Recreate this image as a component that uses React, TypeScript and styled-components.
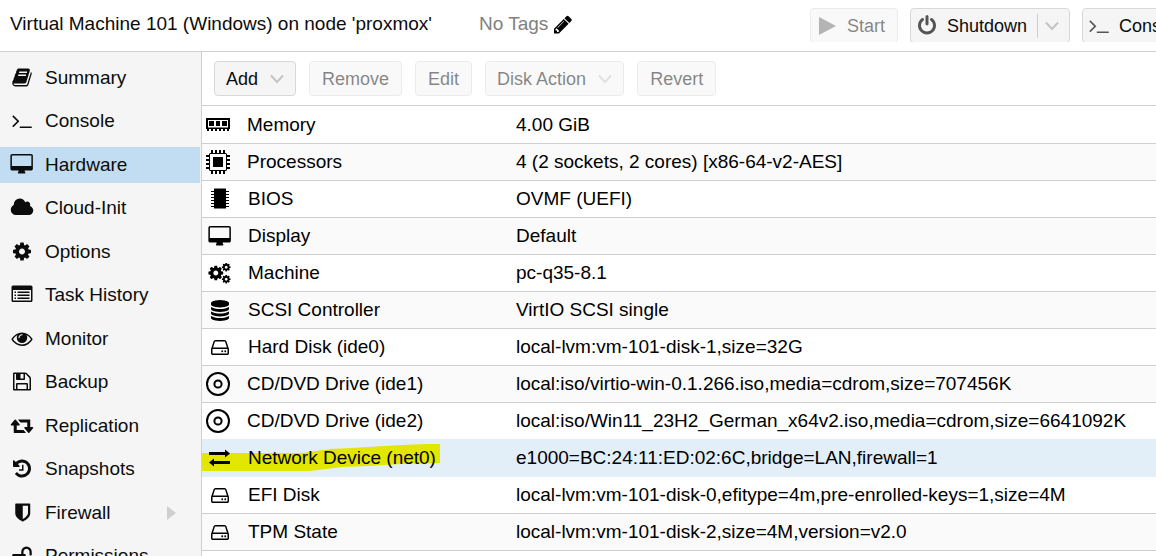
import React from "react";
import styled, { createGlobalStyle, css } from "styled-components";

const GlobalStyle = createGlobalStyle`
  * { box-sizing: border-box; }
  html, body, #root { height: 100%; }
  body {
    margin: 0;
    overflow: hidden;
    background: #fff;
    color: #0c0c0c;
    font-family: "Liberation Sans", Arial, Helvetica, sans-serif;
    font-size: 19px;
  }
`;

/* ---------- icons ---------- */

const COG =
  "M1152 896q0-106-75-181t-181-75-181 75-75 181 75 181 181 75 181-75 75-181zm512-109v222q0 12-8 23t-20 13l-185 28q-19 54-39 91 35 50 107 138 10 12 10 25t-9 23q-27 37-99 108t-94 71q-12 0-26-9l-138-108q-44 23-91 38-16 136-29 186-7 28-36 28h-222q-14 0-24.5-8.5t-11.5-21.5l-28-184q-49-16-90-37l-141 107q-10 9-25 9-14 0-25-11-126-114-165-168-7-10-7-23 0-12 8-23 15-21 51-66.5t54-70.5q-27-50-41-99l-183-27q-13-2-21-12.5t-8-23.5v-222q0-12 8-23t19-13l186-28q14-46 39-92-40-57-107-138-10-12-10-24 0-10 9-23 26-36 98.5-107.5t94.5-71.5q13 0 26 10l138 107q44-23 91-38 16-136 29-186 7-28 36-28h222q14 0 24.5 8.5t11.5 21.5l28 184q49 16 90 37l142-107q9-9 24-9 13 0 25 10 129 119 165 170 7 8 7 22 0 12-8 23-15 21-51 66.5t-54 70.5q26 50 41 98l183 28q13 2 21 12.5t8 23.5z";

const PATHS = {
  book: "M1703 478q40 57 18 129l-275 906q-19 64-76.5 107.5t-122.5 43.5h-923q-77 0-148.5-53.5t-99.5-131.5q-24-67-2-127 0-4 3-27t4-37q1-8-3-21.5t-3-19.5q2-11 8-21t16.5-23.5 16.5-23.5q23-38 45-91.5t30-91.5q3-10 .5-30t-.5-28q3-11 17-28t17-23q21-36 42-92t25-90q1-9-2.5-32t.5-28q4-13 22-30.5t22-22.5q19-26 42.5-84.5t27.5-96.5q1-8-3-25.5t-2-26.5q2-8 9-18t18-23 17-21q8-12 16.5-30.5t15-35 16-36 19.5-32 26.5-23.5 36-11.5 47.5 5.5l-1 3q38-9 51-9h761q74 0 114 56t18 130l-274 906q-36 119-71.5 153.5t-128.5 34.5h-869q-27 0-38 15-11 16-1 43 24 70 144 70h923q29 0 56-15.5t35-41.5l300-987q7-22 5-57 38 15 59 43zm-1064 2q-4 13 2 22.5t20 9.5h608q13 0 25.5-9.5t16.5-22.5l21-64q4-13-2-22.5t-20-9.5h-608q-13 0-25.5 9.5t-16.5 22.5zm-83 256q-4 13 2 22.5t20 9.5h608q13 0 25.5-9.5t16.5-22.5l21-64q4-13-2-22.5t-20-9.5h-608q-13 0-25.5 9.5t-16.5 22.5z",
  terminal:
    "M649 983l-466 466q-10 10-23 10t-23-10l-50-50q-10-10-10-23t10-23l393-393-393-393q-10-10-10-23t10-23l50-50q10-10 23-10t23 10l466 466q10 10 10 23t-10 23zm1079 457v64q0 14-9 23t-23 9h-960q-14 0-23-9t-9-23v-64q0-14 9-23t23-9h960q14 0 23 9t9 23z",
  desktop:
    "M1728 992v-832q0-13-9.500-22.500t-22.500-9.500h-1600q-13 0-22.500 9.500t-9.500 22.500v832q0 13 9.500 22.500t22.500 9.500h1600q13 0 22.500-9.500t9.500-22.500zm128-832v1088q0 66-47 113t-113 47h-544q0 37 16 77.500t32 71 16 43.500q0 26-19 45t-45 19h-512q-26 0-45-19t-19-45q0-14 16-44t32-70 16-78h-544q-66 0-113-47t-47-113v-1088q0-66 47-113t113-47h1600q66 0 113 47t47 113z",
  cloud:
    "M1984 1152q0 159-112.500 271.500t-271.500 112.500h-1088q-185 0-316.500-131.500t-131.500-316.500q0-132 71-241.500t187-163.500q-2-28-2-43 0-212 150-362t362-150q158 0 286.500 88t187.500 230q70-62 166-62 106 0 181 75t75 181q0 75-41 138 129 30 213 134.500t84 239.500z",
  cog: COG,
  eye: "M1664 960q-152-236-381-353 61 104 61 225 0 185-131.5 316.5t-316.5 131.5-316.5-131.5-131.5-316.5q0-121 61-225-229 117-381 353 133 205 333.5 326.5t434.5 121.5 434.5-121.5 333.5-326.5zm-720-384q0-20-14-34t-34-14q-125 0-214.5 89.5t-89.5 214.5q0 20 14 34t34 14 34-14 14-34q0-86 61-147t147-61q20 0 34-14t14-34zm848 384q0 34-20 69-140 230-376.5 368.5t-499.5 138.5-499.5-139-376.5-368q-20-35-20-69t20-69q140-229 376.5-368t499.5-139 499.5 139 376.5 368q20 35 20 69z",
  floppy:
    "M512 1536h768v-384h-768v384zm896 0h128v-896q0-14-10-38.500t-20-34.500l-281-281q-10-10-34-20t-39-10v416q0 40-28 68t-68 28h-576q-40 0-68-28t-28-68v-416h-128v1280h128v-416q0-40 28-68t68-28h832q40 0 68 28t28 68v416zm-384-928v-320q0-13-9.500-22.500t-22.500-9.500h-192q-13 0-22.500 9.500t-9.500 22.500v320q0 13 9.500 22.500t22.500 9.500h192q13 0 22.500-9.500t9.500-22.500zm640 32v928q0 40-28 68t-68 28h-1344q-40 0-68-28t-28-68v-1344q0-40 28-68t68-28h928q40 0 88 20t76 48l280 280q28 28 48 76t20 88z",
  retweet:
    "M1344 1504q0 13-9.5 22.5t-22.5 9.5h-960q-8 0-13.5-2t-9-7-5.5-8-3-11.5-1-11.5v-600h-192q-26 0-45-19t-19-45q0-24 15-41l320-384q19-22 49-22t49 22l320 384q15 17 15 41 0 26-19 45t-45 19h-192v384h576q16 0 25 11l160 192q7 10 7 21zm640-416q0 24-15 41l-320 384q-20 23-49 23t-49-23l-320-384q-15-17-15-41 0-26 19-45t45-19h192v-384h-576q-16 0-25-12l-160-192q-7-9-7-20 0-13 9.5-22.5t22.5-9.5h960q8 0 13.500 2t9 7 5.500 8 3 11.500 1 11.500v600h192q26 0 45 19t19 45z",
  history:
    "M1664 896q0 156-61 298t-164 245-245 164-298 61q-172 0-327-72.5t-264-204.5q-7-10-6.5-22.5t8.5-20.5l137-138q10-9 25-9 16 2 23 12 73 95 179 147t225 52q104 0 198.5-40.5t163.5-109.5 109.5-163.5 40.5-198.5-40.5-198.5-109.5-163.5-163.5-109.5-198.5-40.5q-98 0-188 35.5t-160 101.5l137 138q31 30 14 69-17 40-59 40h-448q-26 0-45-19t-19-45v-448q0-42 40-59 39-17 69 14l130 129q107-101 244.5-156.5t284.5-55.5q156 0 298 61t245 164 164 245 61 298zm-640-288v448q0 14-9 23t-23 9h-320q-14 0-23-9t-9-23v-64q0-14 9-23t23-9h224v-352q0-14 9-23t23-9h64q14 0 23 9t9 23z",
  shield:
    "M1408 960v-640h-448v1137q119-63 213-137 235-184 235-360zm192-768v768q0 86-33.5 170.5t-83 150-118 127.5-126.5 103-121 77.5-89.5 49.5-42.5 20q-12 6-26 6t-26-6q-16-7-42.5-20t-89.5-49.5-121-77.5-126.5-103-118-127.5-83-150-33.5-170.5v-768q0-26 19-45t45-19h1152q26 0 45 19t19 45z",
  unlock:
    "M1728 576v256q0 26-19 45t-45 19h-64q-26 0-45-19t-19-45v-256q0-106-75-181t-181-75-181 75-75 181v192h96q40 0 68 28t28 68v576q0 40-28 68t-68 28h-960q-40 0-68-28t-28-68v-576q0-40 28-68t68-28h672v-192q0-185 131.5-316.5t316.5-131.5 316.5 131.5 131.5 316.5z",
  pencil:
    "M491 1536l91-91-235-235-91 91v107h128v128h107zm523-928q0-22-22-22-10 0-17 7l-542 542q-7 7-7 17 0 22 22 22 10 0 17-7l542-542q7-7 7-17zm-54-192l416 416-832 832h-416v-416zm683 96q0 53-37 90l-166 166-416-416 166-165q36-38 90-38 53 0 91 38l235 234q37 39 37 91z",
  power:
    "M1664 896q0 156-61 298t-164 245-245 164-298 61-298-61-245-164-164-245-61-298q0-182 80.5-343t226.5-270q43-32 95.5-25t83.5 50q32 42 24.5 94.5t-49.5 84.5q-98 74-151.5 181t-53.5 228q0 104 40.5 198.5t109.5 163.5 163.5 109.5 198.5 40.5 198.5-40.5 163.5-109.5 109.5-163.5 40.5-198.5q0-121-53.5-228t-151.5-181q-42-32-49.5-84.5t24.5-94.5q31-43 84-50t95 25q146 109 226.5 270t80.5 343zm-640-768v640q0 52-38 90t-90 38-90-38-38-90v-640q0-52 38-90t90-38 90 38 38 90z",
  database:
    "M896 768q237 0 443-43t325-127v170q0 69-103 128t-280 93.5-385 34.5-385-34.5-280-93.5-103-128v-170q119 84 325 127t443 43zm0 768q237 0 443-43t325-127v170q0 69-103 128t-280 93.5-385 34.5-385-34.5-280-93.5-103-128v-170q119 84 325 127t443 43zm0-384q237 0 443-43t325-127v170q0 69-103 128t-280 93.5-385 34.5-385-34.5-280-93.5-103-128v-170q119 84 325 127t443 43zm0-1152q208 0 385 34.5t280 93.5 103 128v128q0 69-103 128t-280 93.5-385 34.5-385-34.5-280-93.5-103-128v-128q0-69 103-128t280-93.5 385-34.5z",
  hdd: "M1168 1216q0 33-23.5 56.5t-56.5 23.5-56.5-23.5-23.5-56.5 23.5-56.5 56.5-23.5 56.5 23.5 23.5 56.5zm256 0q0 33-23.5 56.5t-56.5 23.5-56.5-23.5-23.5-56.5 23.5-56.5 56.5-23.5 56.5 23.5 23.5 56.5zm112 160v-320q0-13-9.5-22.5t-22.5-9.5h-1216q-13 0-22.5 9.5t-9.5 22.5v320q0 13 9.5 22.5t22.5 9.5h1216q13 0 22.5-9.5t9.5-22.5zm-1230-480h1180l-157-482q-4-13-16-21.500t-26-8.500h-782q-14 0-26 8.500t-16 21.500zm1358 160v320q0 66-47 113t-113 47h-1216q-66 0-113-47t-47-113v-320q0-25 16-75l197-606q17-53 63-86t101-33h782q55 0 101 33t63 86l197 606q16 50 16 75z",
};

type GlyphName = keyof typeof PATHS;

const WIDE: Partial<Record<GlyphName, string>> = {
  desktop: "-96 0 2048 1792",
  cloud: "0 0 2048 1792",
  retweet: "0 0 2048 1792",
};

const GlyphSvg = styled.svg`
  display: block;
  flex: none;
  width: 24px;
  height: 21px;
  fill: currentColor;
`;

const Glyph = ({ name }: { name: GlyphName }) => (
  <GlyphSvg viewBox={WIDE[name] ?? "0 0 1792 1792"} aria-hidden="true">
    <path d={PATHS[name]} />
  </GlyphSvg>
);

const Drawing = styled.svg`
  display: block;
  flex: none;
  width: 24px;
  height: 24px;
  fill: currentColor;
`;

const ListIcon = () => (
  <Drawing viewBox="0 0 24 24" aria-hidden="true">
    <path
      fillRule="evenodd"
      d="M3 3.500h18q1.500 0 1.500 1.500v13.500q0 1.500-1.500 1.500H3q-1.500 0-1.500-1.500V5Q1.500 3.500 3 3.500zM3 8v10q0 .5.5.5h17q.5 0 .5-.5V8z"
    />
    <path d="M4.500 9.500H6v1.400H4.500zM4.500 12.500H6v1.400H4.500zM4.500 15.500H6v1.400H4.500zM7.500 9.500h12v1.400h-12zM7.500 12.500h12v1.400h-12zM7.500 15.500h12v1.400h-12z" />
  </Drawing>
);

const MemoryIcon = () => (
  <Drawing viewBox="0 0 24 24" aria-hidden="true">
    <path fillRule="evenodd" d="M0 5h24v11H0zM2 7v7.500h20V7z" />
    <path d="M3 8h5v5H3zM10 8h4v5h-4zM16 8h5v5h-5zM1 16h2v2H1zM5 16h2v2H5zM9 16h2v2H9zM13 16h2v2h-2zM17 16h2v2h-2zM21 16h2v2h-2z" />
  </Drawing>
);

const CpuIcon = () => (
  <Drawing viewBox="0 0 24 24" aria-hidden="true">
    <path
      fillRule="evenodd"
      d="M4.500 3h15Q21 3 21 4.500v15q0 1.500-1.500 1.500h-15Q3 21 3 19.500v-15Q3 3 4.500 3zM4 4v16h16V4z"
    />
    <path d="M7 7h10v10H7zM5 0h2v3H5zM9 0h2v3H9zM13 0h2v3h-2zM17 0h2v3h-2zM5 21h2v3H5zM9 21h2v3H9zM13 21h2v3h-2zM17 21h2v3h-2zM0 5h3v2H0zM0 9h3v2H0zM0 13h3v2H0zM0 17h3v2H0zM21 5h3v2h-3zM21 9h3v2h-3zM21 13h3v2h-3zM21 17h3v2h-3z" />
  </Drawing>
);

const ChipIcon = () => (
  <Drawing viewBox="0 0 24 24" aria-hidden="true">
    <path d="M6.500 1.500h11q.5 0 .5.500v19q0 .5-.5.500h-11q-.5 0-.5-.5V2q0-.5.5-.5z" />
    <path
      fill="none"
      stroke="currentColor"
      strokeWidth="1.200"
      d="M3 4.500h18M3 7.500h18M3 10.500h18M3 13.500h18M3 16.500h18M3 19.500h18"
    />
  </Drawing>
);

const CogsIcon = () => (
  <Drawing viewBox="0 0 24 24" aria-hidden="true">
    <path transform="translate(-.8 3.400) scale(.0096)" d={COG} />
    <path transform="translate(13.200 1.200) scale(.0056)" d={COG} />
    <path transform="translate(13.200 13.200) scale(.0056)" d={COG} />
  </Drawing>
);

const DiscIcon = () => (
  <Drawing viewBox="0 0 24 24" aria-hidden="true">
    <g fill="none" stroke="currentColor" strokeWidth="2">
      <circle cx="12" cy="12" r="11" />
      <circle cx="12" cy="12" r="3.600" />
    </g>
  </Drawing>
);

const ExchangeIcon = () => (
  <Drawing viewBox="0 0 24 24" aria-hidden="true">
    <path d="M1 6h16V3.500l5 4-5 4V9H1zM22 15H6v-2.500l-5 4 5 4V18h16z" />
  </Drawing>
);

const ChevronSvg = styled.svg`
  display: block;
  flex: none;
  width: 14px;
  height: 10px;
  fill: none;
  stroke: #c4c4c4;
  stroke-width: 2;
`;

const Chevron = () => (
  <ChevronSvg viewBox="0 0 14 10" aria-hidden="true">
    <path d="M1 1.500l6 6.500 6-6.500" />
  </ChevronSvg>
);

const PlaySvg = styled.svg`
  display: block;
  flex: none;
  width: 24px;
  height: 18px;
  fill: #6c6c6c;
`;

const ExpandSvg = styled.svg`
  display: block;
  width: 9px;
  height: 14px;
  margin-left: auto;
  margin-right: 24px;
  fill: #cfcfcf;
`;

/* ---------- layout ---------- */

const Page = styled.div`
  display: flex;
  flex-direction: column;
  height: 100%;
`;

const Header = styled.header`
  display: flex;
  flex: none;
  align-items: center;
  height: 52px;
  padding-left: 10px;
  border-bottom: 1px solid #cfcfcf;
  white-space: nowrap;
`;

const Title = styled.h1`
  margin: 0;
  padding-bottom: 3px;
  font-size: 19px;
  font-weight: 400;
  line-height: 22px;
`;

const Tags = styled.div`
  display: flex;
  align-items: center;
  gap: 3px;
  margin-left: 47px;
  padding-bottom: 3px;
  color: #808080;
  line-height: 22px;
`;

const TagEdit = styled.button`
  padding: 0;
  border: 0;
  background: none;
  color: #000;
`;

const Actions = styled.div`
  display: flex;
  flex: none;
  gap: 12px;
  width: 346px;
  height: 34px;
  margin-left: auto;
  margin-bottom: 1px;
  overflow: hidden;
`;

const buttonLook = css`
  flex: none;
  height: 35px;
  border: 1px solid #d8d8d8;
  border-radius: 4px;
  background: #f5f5f5;
  color: #0c0c0c;
  font-family: inherit;
  font-size: 18px;
  line-height: 20px;
  white-space: nowrap;
`;

const BUTTON_PADDING = {
  text: "0 12px",
  menu: "0 11px",
  icon: "0 12px 0 4px",
};

const Button = styled.button<{ $kind?: keyof typeof BUTTON_PADDING }>`
  ${buttonLook}
  display: flex;
  align-items: center;
  gap: ${(p) => (p.$kind === "icon" ? 8 : 12)}px;
  padding: ${(p) => BUTTON_PADDING[p.$kind ?? "text"]};

  &:disabled {
    opacity: 0.5;
  }

  & > ${GlyphSvg} {
    color: #555;
  }
`;

const Split = styled.div`
  ${buttonLook}
  display: flex;
  align-items: center;
`;

const SplitMain = styled.button`
  display: flex;
  align-items: center;
  gap: 8px;
  padding: 0 10px 0 4px;
  border: 0;
  background: none;
  color: inherit;
  font: inherit;

  & > ${GlyphSvg} {
    color: #555;
  }
`;

const SplitArrow = styled.button`
  height: 24px;
  padding: 0 10px 0 7px;
  border: 0;
  border-left: 1px solid #cfcfcf;
  background: none;
`;

const Body = styled.div`
  display: flex;
  flex: 1;
  min-height: 0;
`;

const Nav = styled.nav`
  flex: none;
  width: 202px;
  padding: 8px 1px 0 0;
  overflow: hidden;
  border-right: 1px solid #cfcfcf;
  background: #f5f5f5;
`;

const NavList = styled.ul`
  margin: 0;
  padding: 0;
  list-style: none;
`;

const NavItem = styled.li`
  margin-bottom: 7px;

  &:nth-child(even) {
    margin-bottom: 8px;
  }
`;

const NavLink = styled.a<{ $active?: boolean }>`
  display: flex;
  align-items: center;
  gap: 11px;
  height: 36px;
  padding-left: 10px;
  background: ${(p) => (p.$active ? "#c2ddf2" : "transparent")};
  color: inherit;
  line-height: 22px;
  text-decoration: none;
  white-space: nowrap;

  & > ${GlyphSvg}, & > ${Drawing} {
    margin-bottom: 2px;
  }
`;

const Main = styled.main`
  flex: 1;
  min-width: 0;
  overflow: hidden;
`;

const Toolbar = styled.div`
  display: flex;
  align-items: center;
  gap: 13px;
  height: 54px;
  margin-bottom: 1px;
  padding-left: 12px;
  border-bottom: 1px solid #cfcfcf;
`;

const Table = styled.table`
  width: 100%;
  border-spacing: 0;
  table-layout: fixed;
`;

const NameCol = styled.col`
  width: 314px;
`;

const Row = styled.tr<{ $selected?: boolean; $plainEdge?: boolean }>`
  --edge: ${(p) => (p.$selected || p.$plainEdge ? "#e2eef8" : "#cfcfcf")};
  background: ${(p) => (p.$selected ? "#e2eef8" : "#fff")};

  &:nth-child(even) {
    background: ${(p) => (p.$selected ? "#e2eef8" : "#fafafa")};
  }
`;

const cellLook = css`
  position: relative;
  height: 37px;
  padding: 0;
  border-bottom: 1px solid var(--edge);
  color: #000;
  font-weight: 400;
  line-height: 22px;
  text-align: left;
  white-space: nowrap;
`;

const NameCell = styled.th`
  ${cellLook}
`;

const ValueCell = styled.td`
  ${cellLook}
`;

const Name = styled.div<{ $large?: boolean }>`
  position: relative;
  display: flex;
  align-items: center;
  gap: ${(p) => (p.$large ? 17 : 16)}px;
  padding-left: ${(p) => (p.$large ? 4 : 6)}px;
`;

const Marker = styled.svg`
  position: absolute;
  top: 3px;
  left: 0;
  width: 240px;
  height: 30px;
  fill: #e2e600;
`;

/* ---------- data ---------- */

const NAV: { label: string; icon: React.ReactNode; expandable?: boolean }[] = [
  { label: "Summary", icon: <Glyph name="book" /> },
  { label: "Console", icon: <Glyph name="terminal" /> },
  { label: "Hardware", icon: <Glyph name="desktop" /> },
  { label: "Cloud-Init", icon: <Glyph name="cloud" /> },
  { label: "Options", icon: <Glyph name="cog" /> },
  { label: "Task History", icon: <ListIcon /> },
  { label: "Monitor", icon: <Glyph name="eye" /> },
  { label: "Backup", icon: <Glyph name="floppy" /> },
  { label: "Replication", icon: <Glyph name="retweet" /> },
  { label: "Snapshots", icon: <Glyph name="history" /> },
  { label: "Firewall", icon: <Glyph name="shield" />, expandable: true },
  { label: "Permissions", icon: <Glyph name="unlock" /> },
];

const HARDWARE: { name: string; value: string; icon: React.ReactNode; large?: boolean }[] = [
  { name: "Memory", value: "4.00 GiB", icon: <MemoryIcon />, large: true },
  { name: "Processors", value: "4 (2 sockets, 2 cores) [x86-64-v2-AES]", icon: <CpuIcon />, large: true },
  { name: "BIOS", value: "OVMF (UEFI)", icon: <ChipIcon /> },
  { name: "Display", value: "Default", icon: <Glyph name="desktop" /> },
  { name: "Machine", value: "pc-q35-8.1", icon: <CogsIcon /> },
  { name: "SCSI Controller", value: "VirtIO SCSI single", icon: <Glyph name="database" /> },
  { name: "Hard Disk (ide0)", value: "local-lvm:vm-101-disk-1,size=32G", icon: <Glyph name="hdd" /> },
  { name: "CD/DVD Drive (ide1)", value: "local:iso/virtio-win-0.1.266.iso,media=cdrom,size=707456K", icon: <DiscIcon />, large: true },
  { name: "CD/DVD Drive (ide2)", value: "local:iso/Win11_23H2_German_x64v2.iso,media=cdrom,size=6641092K", icon: <DiscIcon />, large: true },
  { name: "Network Device (net0)", value: "e1000=BC:24:11:ED:02:6C,bridge=LAN,firewall=1", icon: <ExchangeIcon /> },
  { name: "EFI Disk", value: "local-lvm:vm-101-disk-0,efitype=4m,pre-enrolled-keys=1,size=4M", icon: <Glyph name="hdd" /> },
  { name: "TPM State", value: "local-lvm:vm-101-disk-2,size=4M,version=v2.0", icon: <Glyph name="hdd" /> },
];

const SELECTED = 9;

export default function App() {
  return (
    <Page>
      <GlobalStyle />
      <Header>
        <Title>Virtual Machine 101 (Windows) on node 'proxmox'</Title>
        <Tags>
          No Tags
          <TagEdit type="button" aria-label="Edit tags">
            <Glyph name="pencil" />
          </TagEdit>
        </Tags>
        <Actions>
          <Button type="button" disabled $kind="icon">
            <PlaySvg viewBox="0 0 24 18" aria-hidden="true">
              <path d="M4 0l17 9-17 9z" />
            </PlaySvg>
            Start
          </Button>
          <Split>
            <SplitMain type="button">
              <Glyph name="power" />
              Shutdown
            </SplitMain>
            <SplitArrow type="button" aria-label="More shutdown actions">
              <Chevron />
            </SplitArrow>
          </Split>
          <Button type="button" $kind="icon">
            <Glyph name="terminal" />
            Console
          </Button>
        </Actions>
      </Header>
      <Body>
        <Nav>
          <NavList>
            {NAV.map((item) => (
              <NavItem key={item.label}>
                <NavLink href="#" $active={item.label === "Hardware"}>
                  {item.icon}
                  {item.label}
                  {item.expandable && (
                    <ExpandSvg viewBox="0 0 9 14" aria-hidden="true">
                      <path d="M0 0l9 7-9 7z" />
                    </ExpandSvg>
                  )}
                </NavLink>
              </NavItem>
            ))}
          </NavList>
        </Nav>
        <Main>
          <Toolbar>
            <Button type="button" $kind="menu">
              Add
              <Chevron />
            </Button>
            <Button type="button" disabled>Remove</Button>
            <Button type="button" disabled>Edit</Button>
            <Button type="button" disabled $kind="menu">
              Disk Action
              <Chevron />
            </Button>
            <Button type="button" disabled>Revert</Button>
          </Toolbar>
          <Table>
            <colgroup>
              <NameCol />
              <col />
            </colgroup>
            <tbody>
              {HARDWARE.map((row, i) => (
                <Row key={row.name} $selected={i === SELECTED} $plainEdge={i === SELECTED - 1}>
                  <NameCell scope="row">
                    {i === SELECTED && (
                      <Marker viewBox="0 0 240 30" aria-hidden="true">
                        <path d="M0 10H100L128 6 150 5 200 2 225 1H238V20L200 21 165 23 140 24 108 28H0z" />
                      </Marker>
                    )}
                    <Name $large={row.large}>
                      {row.icon}
                      {row.name}
                    </Name>
                  </NameCell>
                  <ValueCell>{row.value}</ValueCell>
                </Row>
              ))}
            </tbody>
          </Table>
        </Main>
      </Body>
    </Page>
  );
}
